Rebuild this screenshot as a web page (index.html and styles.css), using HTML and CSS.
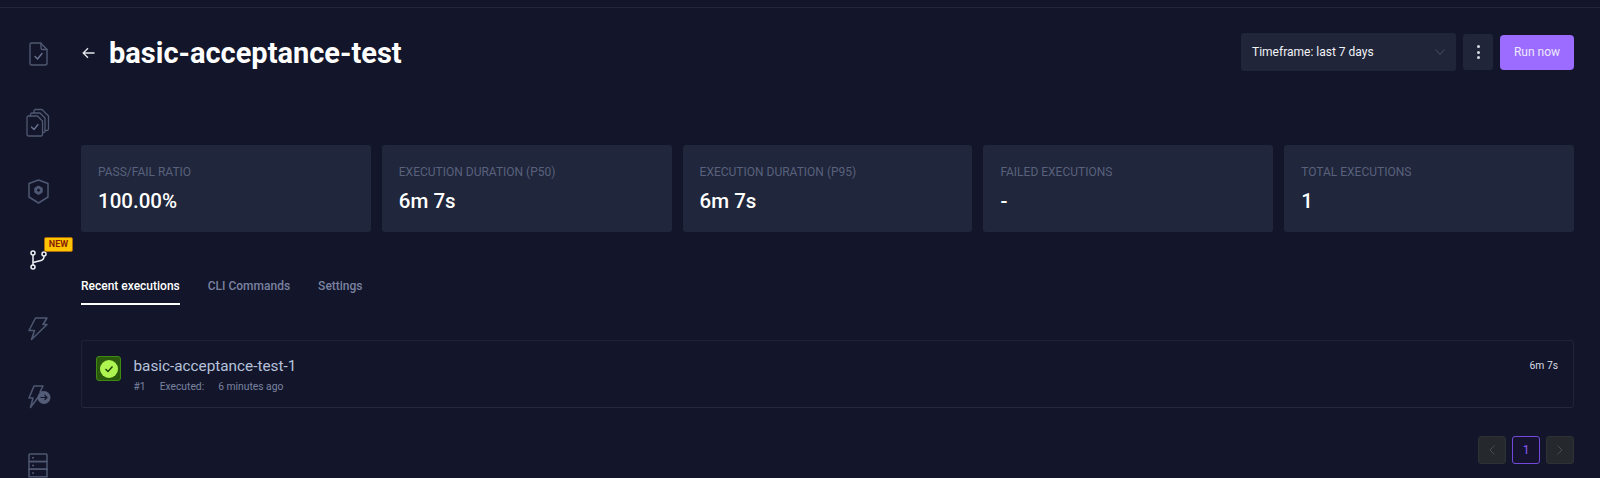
FILE: index.html
```html
<!DOCTYPE html>
<html lang="en">
<head>
<meta charset="utf-8">
<title>basic-acceptance-test</title>
<link rel="stylesheet" href="styles.css">
</head>
<body>
<div class="app">
  <nav class="sidebar">
    <a class="nav-item"><svg width="19" height="24" viewBox="0 0 19 24" fill="none" stroke="#4f5872" stroke-width="1.4" stroke-linejoin="round" stroke-linecap="round"><path d="M2.500 1h9l6.500 6.500v13.500a2 2 0 0 1-2 2H2.500a1.500 1.500 0 0 1-1.500-1.500V2.500A1.500 1.500 0 0 1 2.500 1z"/><path d="M12 1v5a1.500 1.500 0 0 0 1.500 1.500H18"/><path d="M6 14.500l2.500 2.500 4.500-5.500" stroke="#6a7390"/></svg></a>
    <a class="nav-item"><svg width="24" height="29" viewBox="0 0 24 29" fill="none" stroke="#4f5872" stroke-width="1.3" stroke-linejoin="round" stroke-linecap="round"><path d="M2.500 8h9l5 5v13.500a1.500 1.500 0 0 1-1.500 1.500H2.500A1.500 1.500 0 0 1 1 26.500v-17A1.500 1.500 0 0 1 2.500 8z"/><path d="M4.500 8V6.500A1.500 1.500 0 0 1 6 5h8l5 5v13a1.500 1.500 0 0 1-1.500 1.500h-1"/><path d="M8 4.500V3A1.500 1.500 0 0 1 9.500 1.500H16l6.500 6.500v13a1.500 1.500 0 0 1-1.500 1.500h-2"/><path d="M5.500 19l2.500 2.500 4-5" stroke="#6a7390"/></svg></a>
    <a class="nav-item"><svg width="21" height="25" viewBox="0 0 21 25" fill="none" stroke="#4f5872" stroke-width="1.5" stroke-linejoin="round"><path d="M10.500 1l9.500 3.500v13.500l-9.500 6L1 18V4.500z"/><path d="M10.500 7l3.700 2.100v4.300l-3.700 2.100-3.700-2.100V9.100z" fill="#4f5872" stroke-width="1"/><circle cx="10.500" cy="11.250" r="1.400" fill="#13162a" stroke="none"/></svg></a>
    <a class="nav-item nav-git">
      <svg width="17" height="20" viewBox="0 0 17 20" fill="none" stroke="#eef0f4" stroke-width="1.500"><circle cx="3" cy="3" r="2"/><circle cx="3" cy="17" r="2"/><circle cx="14" cy="4" r="2"/><path d="M3 5v10"/><path d="M3 12.500l8-2c2-.5 3-1.500 3-4.500"/></svg>
      <span class="badge">NEW</span>
    </a>
    <a class="nav-item"><svg width="20" height="24" viewBox="0 0 20 24" fill="none" stroke="#4f5872" stroke-width="1.500" stroke-linejoin="round"><path d="M7.500 1H19l-4 6.500h4L3.500 22.500 6.500 13.500H1z"/></svg></a>
    <a class="nav-item nav-bolt2"><svg width="23" height="24" viewBox="0 0 23 24" fill="none"><path d="M6 1h9l-3 6h2L2.500 22.500 5 13H1z" stroke="#4f5872" stroke-width="1.500" stroke-linejoin="round"/><circle cx="16" cy="12.500" r="6.500" fill="#545d78"/><path d="M12.500 12.500h6.500M16.500 10l2.500 2.500-2.500 2.500" stroke="#13162a" stroke-width="1.100"/></svg></a>
    <a class="nav-item"><svg width="20" height="25" viewBox="0 0 20 25" fill="none" stroke="#4f5872" stroke-width="1.500"><rect x="1" y="1" width="18" height="7.600" rx="1"/><rect x="1" y="8.600" width="18" height="7.600"/><rect x="1" y="16.200" width="18" height="7.600"/><path d="M4 4.800h2M4 12.400h2M4 20h2"/></svg></a>
  </nav>

  <main class="content">
    <header class="page-header">
      <div class="title-wrap">
        <svg class="back" width="13" height="12" viewBox="0 0 13 12" fill="none" stroke="#e4e6eb" stroke-width="1.300"><path d="M12.500 6H1.200M6 1.200L1.200 6 6 10.800"/></svg>
        <h1 class="title">basic-acceptance-test</h1>
      </div>
      <div class="actions">
        <div class="select">
          <span>Timeframe: last 7 days</span>
          <svg width="10" height="6" viewBox="0 0 10 6" fill="none" stroke="#465069" stroke-width="1"><path d="M.5.500L5 5.500 9.500.500"/></svg>
        </div>
        <button class="more" type="button" aria-label="More"><i></i><i></i><i></i></button>
        <button class="run" type="button">Run now</button>
      </div>
    </header>

    <section class="metrics">
      <div class="card"><div class="card-label">PASS/FAIL RATIO</div><div class="card-value">100.00%</div></div>
      <div class="card"><div class="card-label">EXECUTION DURATION (P50)</div><div class="card-value">6m 7s</div></div>
      <div class="card"><div class="card-label">EXECUTION DURATION (P95)</div><div class="card-value">6m 7s</div></div>
      <div class="card"><div class="card-label">FAILED EXECUTIONS</div><div class="card-value">-</div></div>
      <div class="card"><div class="card-label">TOTAL EXECUTIONS</div><div class="card-value">1</div></div>
    </section>

    <div class="tabs">
      <a class="tab active">Recent executions</a>
      <a class="tab">CLI Commands</a>
      <a class="tab">Settings</a>
    </div>

    <section class="exec">
      <div class="status"><span class="status-dot"><svg width="10" height="8" viewBox="0 0 10 8" fill="none" stroke="#1f3d06" stroke-width="1.400"><path d="M1.500 4l2.500 2.500 4.500-5"/></svg></span></div>
      <div class="exec-main">
        <div class="exec-name">basic-acceptance-test-1</div>
        <div class="exec-meta"><span>#1</span><span>Executed:</span><span>6 minutes ago</span></div>
      </div>
      <div class="exec-time">6m 7s</div>
    </section>

    <div class="pager">
      <span class="page off"><svg width="6" height="10" viewBox="0 0 6 10" fill="none" stroke="#4a4d4e" stroke-width="1"><path d="M5.500.500L1 5l4.500 4.500"/></svg></span>
      <span class="page current">1</span>
      <span class="page off"><svg width="6" height="10" viewBox="0 0 6 10" fill="none" stroke="#4a4d4e" stroke-width="1"><path d="M.500.500L5 5 .500 9.500"/></svg></span>
    </div>
  </main>
</div>
</body>
</html>
```

FILE: styles.css
```css
* { box-sizing: border-box; }
html, body { margin: 0; height: 100%; overflow: hidden; }
body {
  background: #13162a;
  color: #fff;
  font-family: Roboto, "Liberation Sans", sans-serif;
}
.app {
  display: flex;
  height: 478px;
  border-top: 1px solid #232739;
  margin-top: 7px;
}
.sidebar {
  width: 81px;
  flex: none;
  display: flex;
  flex-direction: column;
  padding: 11.500px 5px 0 0;
}
.nav-item {
  position: relative;
  flex: none;
  height: 68.700px;
  display: flex;
  align-items: center;
  justify-content: center;
}
.nav-item svg { display: block; }
.nav-bolt2 svg { margin-left: 3px; }
.badge {
  position: absolute;
  left: 44px;
  top: 11px;
  width: 29px;
  height: 15px;
  background: #ffc400;
  border: 1px solid #a8690c;
  border-radius: 2px;
  color: #8a1f06;
  font-size: 9px;
  font-weight: 700;
  line-height: 13px;
  text-align: center;
}
.content {
  width: 1493px;
  flex: none;
  display: flex;
  flex-direction: column;
}
.page-header {
  height: 137px;
  display: flex;
  justify-content: space-between;
  align-items: flex-start;
}
.title-wrap {
  display: flex;
  align-items: center;
  gap: 14px;
  padding-top: 27px;
  padding-left: 1px;
}
.back { display: block; }
.title {
  margin: 0;
  font-size: 29px;
  font-weight: 700;
  line-height: 36px;
  color: #fff;
}
.actions {
  display: flex;
  align-items: center;
  gap: 7px;
  padding-top: 25px;
}
.select {
  width: 215px;
  height: 38px;
  padding: 0 11px;
  background: #202539;
  border-radius: 3px;
  display: flex;
  align-items: center;
  justify-content: space-between;
  font-size: 12px;
  color: #f2f3f7;
}
.more {
  width: 30px;
  height: 36px;
  margin: 0;
  padding: 0;
  border: 0;
  border-radius: 3px;
  background: #202539;
  display: flex;
  flex-direction: column;
  align-items: center;
  justify-content: center;
  gap: 2.500px;
}
.more i {
  width: 3px;
  height: 3px;
  border-radius: 50%;
  background: #d8dbe3;
}
.run {
  width: 74px;
  height: 35px;
  border: 0;
  border-radius: 4px;
  background: #9b6cff;
  color: #eee8ff;
  font: 400 12px Roboto, "Liberation Sans", sans-serif;
}
.metrics {
  display: grid;
  grid-template-columns: repeat(5, 1fr);
  gap: 11px;
}
.card {
  height: 87px;
  padding: 20px 17px 0;
  background: #20263b;
  border-radius: 3px;
}
.card-label {
  font-size: 12px;
  line-height: 14px;
  color: #59617c;
}
.card-value {
  margin-top: 9px;
  font-size: 20.500px;
  font-weight: 500;
  line-height: 26px;
  color: #fff;
}
.tabs {
  display: flex;
  gap: 28px;
  margin-top: 43px;
  height: 33px;
}
.tab {
  height: 30px;
  font-size: 12px;
  font-weight: 500;
  line-height: 14px;
  color: #7a82a0;
  padding-top: 4px;
}
.tab.active {
  color: #fff;
  border-bottom: 2px solid #fff;
}
.exec {
  margin-top: 32px;
  height: 68px;
  padding: 15px 15px 0 14px;
  display: flex;
  align-items: flex-start;
  border: 1px solid #1e2336;
  border-bottom-color: #25293f;
  border-radius: 3px;
}
.status {
  width: 25px;
  height: 25px;
  background: #2b5a0c;
  border: 1px solid #3f8a10;
  border-radius: 3px;
  display: flex;
  align-items: center;
  justify-content: center;
  flex: none;
}
.status-dot {
  width: 18px;
  height: 18px;
  border-radius: 50%;
  background: #aef552;
  display: flex;
  align-items: center;
  justify-content: center;
}
.exec-main {
  margin-left: 12.500px;
  flex: 1;
}
.exec-name {
  font-size: 15.300px;
  line-height: 20px;
  color: #b6c2dc;
}
.exec-meta {
  display: flex;
  gap: 14px;
  margin-top: 4px;
  font-size: 10.300px;
  line-height: 14px;
  color: #7a82a0;
}
.exec-time {
  font-size: 10.300px;
  line-height: 14px;
  color: #d8dce6;
  margin-top: 3px;
}
.pager {
  display: flex;
  justify-content: flex-end;
  gap: 6px;
  margin-top: 28px;
}
.page {
  width: 28px;
  height: 28px;
  border-radius: 3px;
  display: flex;
  align-items: center;
  justify-content: center;
  font-size: 12px;
}
.page.off {
  background: #25282c;
  border: 1px solid #2f3235;
}
.page.current {
  background: #15132e;
  border: 1px solid #7249d8;
  color: #8b5cf6;
}
```
